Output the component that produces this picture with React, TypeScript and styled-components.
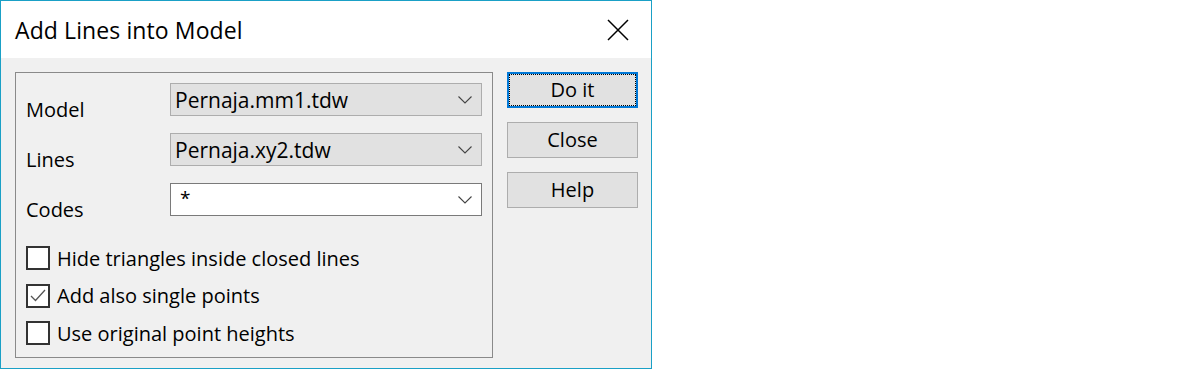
import styled, { createGlobalStyle } from 'styled-components'

const GlobalStyle = createGlobalStyle`
  body {
    margin: 0;
    background: #ffffff;
    font-family: 'Open Sans', 'Noto Sans', Arial, sans-serif;
    color: #000;
  }
`

interface ComboProps {
    value: string
    editable?: boolean
}

function Combo ({ value, editable }: ComboProps): JSX.Element {
    return <ComboBox $editable={editable}>
        <ComboText $editable={editable}>{value}</ComboText>
        <svg width='14' height='8' viewBox='0 0 14 8'>
            <polyline points='0.5,0.5 7,7 13.5,0.5' fill='none' stroke='#444' strokeWidth='1.1' />
        </svg>
    </ComboBox>
}

interface CheckProps {
    label: string
    checked?: boolean
}

function Check ({ label, checked }: CheckProps): JSX.Element {
    return <CheckRow>
        <CheckBox>
            {checked && <svg width='20' height='20' viewBox='0 0 20 20'>
                <polyline points='3,10 7.5,14.5 17,4' fill='none' stroke='#555' strokeWidth='1.3' />
            </svg>}
        </CheckBox>
        <CheckLabel>{label}</CheckLabel>
    </CheckRow>
}

export default function App (): JSX.Element {
    const fields = [
        { label: 'Model', value: 'Pernaja.mm1.tdw' },
        { label: 'Lines', value: 'Pernaja.xy2.tdw' },
        { label: 'Codes', value: '*', editable: true },
    ]
    const checks = [
        { label: 'Hide triangles inside closed lines', checked: false },
        { label: 'Add also single points', checked: true },
        { label: 'Use original point heights', checked: false },
    ]
    return <>
        <GlobalStyle />
        <Window>
            <TitleBar>
                <Title>Add Lines into Model</Title>
                <CloseIcon width='22' height='22' viewBox='0 0 22 22'>
                    <path d='M1 1 L21 21 M21 1 L1 21' stroke='#000' strokeWidth='1.5' />
                </CloseIcon>
            </TitleBar>
            <Body>
                <GroupBox>
                    <FieldGrid>
                        {fields.map((f) => <Field key={f.label}>
                            <FieldLabel>{f.label}</FieldLabel>
                            <Combo value={f.value} editable={f.editable} />
                        </Field>)}
                    </FieldGrid>
                    <CheckList>
                        {checks.map((c) => <Check key={c.label} label={c.label} checked={c.checked} />)}
                    </CheckList>
                </GroupBox>
                <ButtonColumn>
                    <Button $default>Do it</Button>
                    <Button>Close</Button>
                    <Button>Help</Button>
                </ButtonColumn>
            </Body>
        </Window>
    </>
}

const Window = styled.div`
    width: 652px;
    height: 369px;
    box-sizing: border-box;
    border: 1px solid #1aa0c6;
    display: flex;
    flex-direction: column;
`

const TitleBar = styled.div`
    height: 57px;
    flex-shrink: 0;
    background: #fff;
    display: flex;
    align-items: center;
    justify-content: space-between;
    padding: 0 22px 0 14px;
`

const Title = styled.div`
    font-size: 23px;
    letter-spacing: 0.1px;
    line-height: 26px;
    margin-top: 1px;
`

const CloseIcon = styled.svg`
    margin-top: 1px;
`

const Body = styled.div`
    flex: 1;
    background: #f0f0f0;
    display: flex;
    align-items: flex-start;
    gap: 14px;
    padding: 14px 13px 0 14px;
`

const GroupBox = styled.div`
    width: 478px;
    height: 286px;
    box-sizing: border-box;
    border: 1px solid #8a8a8a;
    padding: 10px 9px 0 10px;
    display: flex;
    flex-direction: column;
`

const FieldGrid = styled.div`
    display: flex;
    flex-direction: column;
    gap: 17px;
`

const Field = styled.div`
    display: grid;
    grid-template-columns: 144px 312px;
    height: 33px;
`

const FieldLabel = styled.div`
    font-size: 20px;
    line-height: 26px;
    padding-top: 14px;
`

const ComboBox = styled.div<{ $editable?: boolean }>`
    box-sizing: border-box;
    height: 33px;
    display: flex;
    align-items: center;
    justify-content: space-between;
    padding: 0 9px 0 4px;
    background: ${p => p.$editable ? '#ffffff' : '#e1e1e1'};
    border: 1px solid ${p => p.$editable ? '#7a7a7a' : '#adadad'};
`

const ComboText = styled.span<{ $editable?: boolean }>`
    font-size: ${p => p.$editable ? '19px' : '21px'};
    line-height: 26px;
    padding-left: ${p => p.$editable ? '5px' : '0'};
    margin-top: ${p => p.$editable ? '-3px' : '0'};
`

const CheckList = styled.div`
    display: flex;
    flex-direction: column;
    gap: 13.5px;
    margin-top: 30px;
`

const CheckRow = styled.div`
    display: flex;
    align-items: center;
    gap: 7px;
    height: 24px;
`

const CheckBox = styled.div`
    width: 24px;
    height: 24px;
    flex-shrink: 0;
    box-sizing: border-box;
    border: 2px solid #333;
    background: #fff;
    display: flex;
    align-items: center;
    justify-content: center;
`

const CheckLabel = styled.span`
    font-size: 20px;
    line-height: 26px;
    margin-top: 1px;
`

const ButtonColumn = styled.div`
    display: flex;
    flex-direction: column;
    gap: 14px;
`

const Button = styled.button<{ $default?: boolean }>`
    width: 131px;
    height: 36px;
    box-sizing: border-box;
    font-family: inherit;
    font-size: 20px;
    line-height: 26px;
    color: #000;
    background: #e1e1e1;
    padding: 0 0 1px;
    border: ${p => p.$default ? '2px solid #0078d7' : '1px solid #adadad'};
    outline: ${p => p.$default ? '1px dotted #000' : 'none'};
    outline-offset: -3px;
`
